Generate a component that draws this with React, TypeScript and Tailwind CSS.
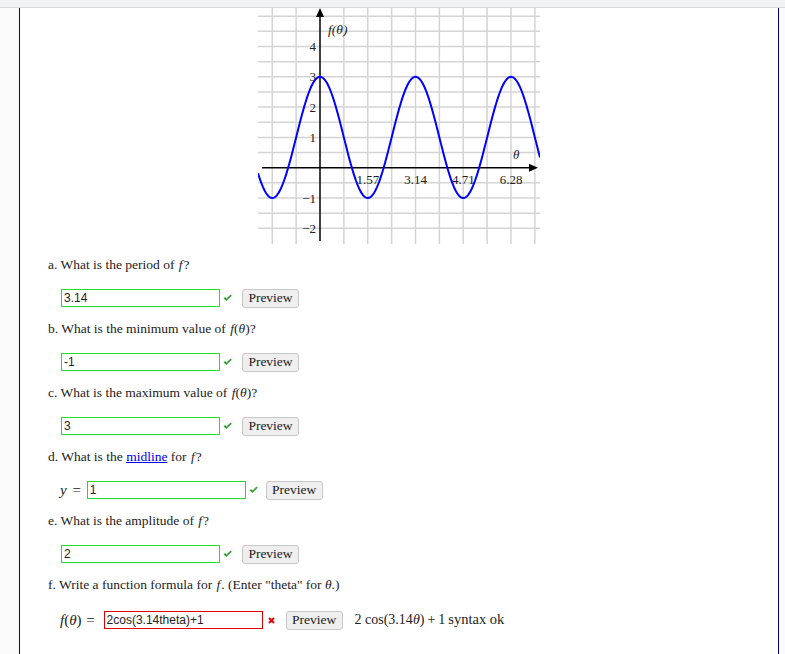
import React from "react";

const serif = "font-['Liberation_Serif',serif]";
const sans = "font-['Liberation_Sans',sans-serif]";

function Graph() {
  const ox = 62;
  const oy = 159.7;
  const gx = 23.875;
  const gy = 15.15;
  const W = 282;
  const H = 236;

  const vLines: number[] = [];
  for (let k = -2; k <= 9; k++) if (k !== 0) vLines.push(ox + k * gx);
  const hLines: number[] = [];
  for (let k = -4; k <= 10; k++) if (k !== 0) hLines.push(oy - k * gy);

  let d = "";
  for (let px = 0; px <= W; px += 1) {
    const v = 2 * Math.cos((2 * Math.PI * (px - ox)) / (gx * 4)) + 1;
    const y = oy - v * gy * 2;
    d += (px === 0 ? "M" : "L") + px + " " + y.toFixed(2) + " ";
  }

  const yLabels = [
    { t: "4", v: 4 },
    { t: "3", v: 3 },
    { t: "2", v: 2 },
    { t: "1", v: 1 },
    { t: "\u22121", v: -1 },
    { t: "\u22122", v: -2 },
  ];
  const xLabels = ["1.57", "3.14", "4.71", "6.28"];

  return (
    <svg width={W} height={H} className="mx-auto block" viewBox={`0 0 ${W} ${H}`}>
      {vLines.map((x) => (
        <line key={"v" + x} x1={x} y1={0} x2={x} y2={H} stroke="#d4d4d4" strokeWidth={1.5} />
      ))}
      {hLines.map((y) => (
        <line key={"h" + y} x1={0} y1={y} x2={W} y2={y} stroke="#d4d4d4" strokeWidth={1.5} />
      ))}
      <line x1={ox} y1={H - 3} x2={ox} y2={6} stroke="#000" strokeWidth={1.5} />
      <polygon points={`${ox},0 ${ox - 4},9 ${ox + 4},9`} fill="#000" />
      <line x1={4} y1={oy} x2={272} y2={oy} stroke="#000" strokeWidth={1.5} />
      <polygon points={`280,${oy} 271,${oy - 4} 271,${oy + 4}`} fill="#000" />
      <g fontFamily="'Liberation Serif', serif" fontSize={13} fill="#222">
        {yLabels.map((l) => (
          <text key={l.t} x={ox - 4} y={oy - l.v * gy * 2 + 4.5} textAnchor="end">
            {l.t}
          </text>
        ))}
        {xLabels.map((t, i) => (
          <text key={t} x={ox + (i + 1) * gx * 2} y={176} textAnchor="middle">
            {t}
          </text>
        ))}
        <text x={70} y={26} fontStyle="italic" fontSize={13.5}>
          f(θ)
        </text>
        <text x={255} y={151} fontStyle="italic">
          θ
        </text>
      </g>
      <path d={d} fill="none" stroke="#0000ff" strokeWidth={2} />
    </svg>
  );
}

function Check() {
  return (
    <svg width="9" height="8" viewBox="0 0 9 8" className="ml-[3px]">
      <path d="M0.5 4.5 L2 3 L3.5 4.5 L7.5 0.5 L8.8 1.8 L3.5 7 Z" fill="#3ca33c" />
    </svg>
  );
}

function Cross() {
  return (
    <svg width="7" height="7" viewBox="0 0 7 7" className="ml-[5px]">
      <path d="M1 1 L6 6 M6 1 L1 6" stroke="#dd1111" strokeWidth="2.2" />
    </svg>
  );
}

function PreviewButton({ ml }: { ml: string }) {
  return (
    <button
      className={`${ml} h-[19px] w-[57px] rounded-[3px] border border-[#c8c8c8] bg-[#efefef] ${serif} text-[13.5px] leading-none text-[#222]`}
    >
      Preview
    </button>
  );
}

function Answer({ value, bad = false }: { value: string; bad?: boolean }) {
  return (
    <input
      readOnly
      value={value}
      className={`w-[159px] h-[18px] border ${bad ? "border-[#e00000]" : "border-[#1ee01e]"} bg-white pl-[2px] ${sans} text-[12px] text-[#222] outline-none`}
    />
  );
}

function Question({ children, first = false }: { children: React.ReactNode; first?: boolean }) {
  return (
    <div className={`${first ? "mt-[12px]" : "mt-[13px]"} h-[18px] pl-[28px] ${serif} text-[13.5px] leading-[18px] text-[#222]`}>
      {children}
    </div>
  );
}

function Row({ children, mt = "mt-[15px]" }: { children: React.ReactNode; mt?: string }) {
  return <div className={`${mt} flex h-[18px] items-center pl-[40px]`}>{children}</div>;
}

const F = () => <i className="mx-[1px]">f</i>;
const FTheta = () => (
  <span>
    <i className="ml-[1px]">f</i>(<i>θ</i>)
  </span>
);

export default function App() {
  return (
    <div className="min-h-[654px] w-full bg-[#fafafa]">
      <div className="h-[7px] bg-[#f1f3f5]" />
      <div className="h-px bg-[#dadada]" />
      <div className="flex">
        <div className="w-[19px] shrink-0" />
        <div className="min-h-[646px] w-[760px] border-x border-[#00008b] bg-white">
          <Graph />
          <Question first>
            a. What is the period of <F />?
          </Question>
          <Row>
            <div className="w-px" />
            <Answer value="3.14" />
            <Check />
            <PreviewButton ml="ml-[10px]" />
          </Row>
          <Question>
            b. What is the minimum value of <FTheta />?
          </Question>
          <Row>
            <div className="w-px" />
            <Answer value="-1" />
            <Check />
            <PreviewButton ml="ml-[10px]" />
          </Row>
          <Question>
            c. What is the maximum value of <FTheta />?
          </Question>
          <Row>
            <div className="w-px" />
            <Answer value="3" />
            <Check />
            <PreviewButton ml="ml-[10px]" />
          </Row>
          <Question>
            d. What is the{" "}
            <a href="#" className="text-[#0000ee] underline">
              midline
            </a>{" "}
            for <F />?
          </Question>
          <Row>
            <span className={`${serif} flex items-center text-[15px] text-[#222]`}>
              <i>y</i>
              <span className="ml-[5px] inline-block w-[10px] text-center">=</span>
            </span>
            <div className="ml-[5px]" />
            <Answer value="1" />
            <Check />
            <PreviewButton ml="ml-[8px]" />
          </Row>
          <Question>
            e. What is the amplitude of <F />?
          </Question>
          <Row>
            <div className="w-px" />
            <Answer value="2" />
            <Check />
            <PreviewButton ml="ml-[10px]" />
          </Row>
          <Question>
            f. Write a function formula for <F />. (Enter "theta" for <i>θ</i>.)
          </Question>
          <Row mt="mt-[17px]">
            <span className={`${serif} flex items-center text-[15px] text-[#222]`}>
              <span>
                <i>f</i>(<i>θ</i>)
              </span>
              <span className="ml-[3px] inline-block w-[12px] text-center">=</span>
            </span>
            <div className="ml-[7px]" />
            <Answer value="2cos(3.14theta)+1" bad />
            <Cross />
            <PreviewButton ml="ml-[11px]" />
            <span className={`ml-[12px] ${serif} text-[14px] text-[#222]`}>
              2 cos(3.14<i>θ</i>)<span className="mx-[3px]">+</span>1
              <span className="ml-[3px] text-[14.5px]">syntax ok</span>
            </span>
          </Row>
        </div>
        <div className="flex-1" />
      </div>
    </div>
  );
}
